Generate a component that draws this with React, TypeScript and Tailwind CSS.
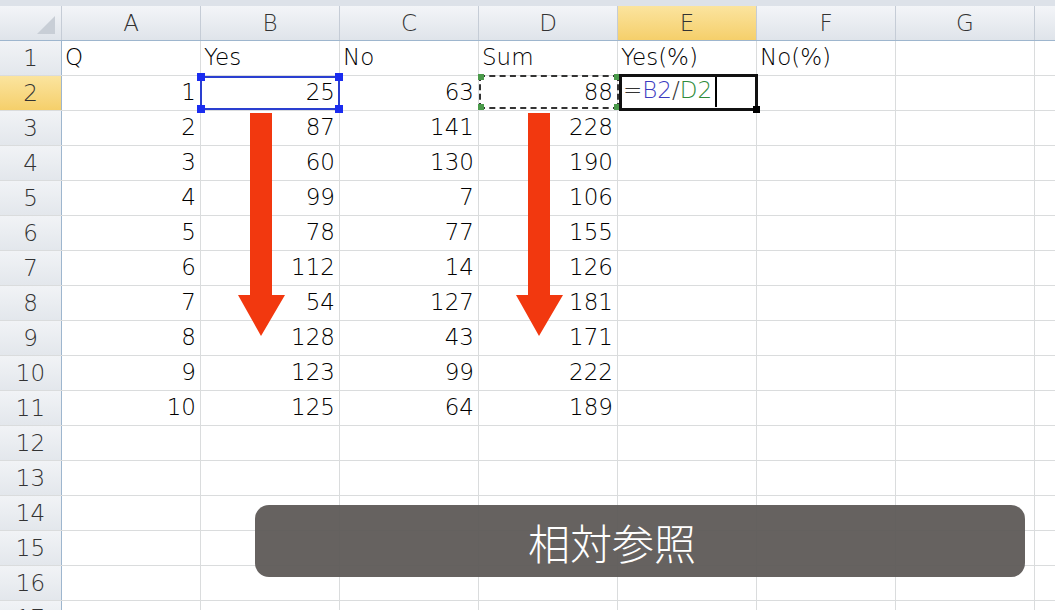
import React from "react";

const cols = ["A", "B", "C", "D", "E", "F", "G"];
const data: (string | number)[][] = [
  ["Q", "Yes", "No", "Sum", "Yes(%)", "No(%)", ""],
  [1, 25, 63, 88, "", "", ""],
  [2, 87, 141, 228],
  [3, 60, 130, 190],
  [4, 99, 7, 106],
  [5, 78, 77, 155],
  [6, 112, 14, 126],
  [7, 54, 127, 181],
  [8, 128, 43, 171],
  [9, 123, 99, 222],
  [10, 125, 64, 189],
];

const font = { fontFamily: '"DejaVu Sans", "Noto Sans CJK JP", sans-serif' };

function Arrow({ left }: { left: number }) {
  return (
    <svg className="absolute" style={{ left, top: 113 }} width="50" height="225" viewBox="0 0 50 225">
      <path d="M13 0 H35 V182 H48 L24 223 L1 182 H13 Z" fill="#f2380f" />
    </svg>
  );
}

export default function App() {
  const rows = Array.from({ length: 17 }, (_, i) => i + 1);
  return (
    <div className="relative w-[1055px] h-[610px] overflow-hidden bg-white text-[23px] text-black font-light" style={font}>
      <div className="h-[6px] bg-[#dde2e9]" />
      <div className="flex h-[35px] border-b border-[#9eb6ce]">
        <div className="w-[62px] shrink-0 bg-gradient-to-b from-[#f3f5f8] to-[#dfe4ea] border-r border-[#c5ccd6] relative">
          <svg className="absolute right-[6px] bottom-[6px]" width="18" height="18"><path d="M18 0 V18 H0 Z" fill="#c8ced6" /></svg>
        </div>
        {cols.map((c) => (
          <div key={c} className={`w-[139px] shrink-0 flex items-center justify-center border-r border-[#c5ccd6] text-[#333] ${c === "E" ? "bg-gradient-to-b from-[#fbe49e] to-[#f5cf6a]" : "bg-gradient-to-b from-[#f3f5f8] to-[#dfe4ea]"}`}>{c}</div>
        ))}
        <div className="flex-1 bg-gradient-to-b from-[#f3f5f8] to-[#dfe4ea]" />
      </div>
      {rows.map((r) => (
        <div key={r} className="flex h-[35px] border-b border-[#dadcdd]">
          <div className={`w-[62px] shrink-0 flex items-center justify-center border-r border-[#9eb6ce] text-[#333] ${r === 2 ? "bg-gradient-to-b from-[#fbe49e] to-[#f5cf6a]" : "bg-gradient-to-b from-[#f1f3f6] to-[#e3e7ec]"}`}>{r}</div>
          {cols.map((c, ci) => {
            const v = data[r - 1]?.[ci];
            const isText = r === 1;
            return (
              <div key={c} className={`w-[139px] shrink-0 flex items-end pb-[1px] border-r border-[#dadcdd] ${isText ? "justify-start pl-[3px]" : "justify-end pr-[4px]"}`}>
                {v === undefined ? "" : v}
              </div>
            );
          })}
          <div className="flex-1" />
        </div>
      ))}
      <div className="absolute left-[200px] top-[76px] w-[140px] h-[34px] border-2 border-[#2a3fd0]">
        {["-left-[5px] -top-[5px]", "-right-[5px] -top-[5px]", "-left-[5px] -bottom-[5px]", "-right-[5px] -bottom-[5px]"].map((p, i) => (
          <div key={i} className={`absolute w-[8px] h-[8px] bg-[#1a2cf0] ${p}`} />
        ))}
      </div>
      <div className="absolute left-[479px] top-[75px] w-[140px] h-[34px] border-2 border-dashed border-[#333]">
        <div className="absolute -left-[3px] -top-[3px] w-[6px] h-[6px] bg-[#4a9a4a]" />
        <div className="absolute -right-[3px] -top-[3px] w-[6px] h-[6px] bg-[#4a9a4a]" />
        <div className="absolute -left-[3px] -bottom-[3px] w-[6px] h-[6px] bg-[#4a9a4a]" />
        <div className="absolute -right-[3px] -bottom-[3px] w-[6px] h-[6px] bg-[#4a9a4a]" />
      </div>
      <div className="absolute left-[619px] top-[74px] w-[139px] h-[37px] border-[3px] border-[#111] bg-white flex items-end pb-[1px] pl-[1px]">
        <span className="text-[#333]">=</span><span className="text-[#3b3bbf]">B2</span><span className="text-[#333]">/</span><span className="text-[#2e8b3a]">D2</span>
        <span className="ml-[3px] w-[2px] h-[30px] bg-black self-center" />
        <div className="absolute -right-[5px] -bottom-[5px] w-[7px] h-[7px] bg-black" />
      </div>
      <Arrow left={237} />
      <Arrow left={515} />
      <div className="absolute left-[255px] top-[505px] w-[770px] h-[72px] rounded-[14px] bg-[#5e5a57]/95 flex items-center justify-center pr-[56px] text-white text-[42px]" style={{ fontFamily: '"Noto Sans CJK JP", sans-serif' }}>
        相対参照
      </div>
    </div>
  );
}
